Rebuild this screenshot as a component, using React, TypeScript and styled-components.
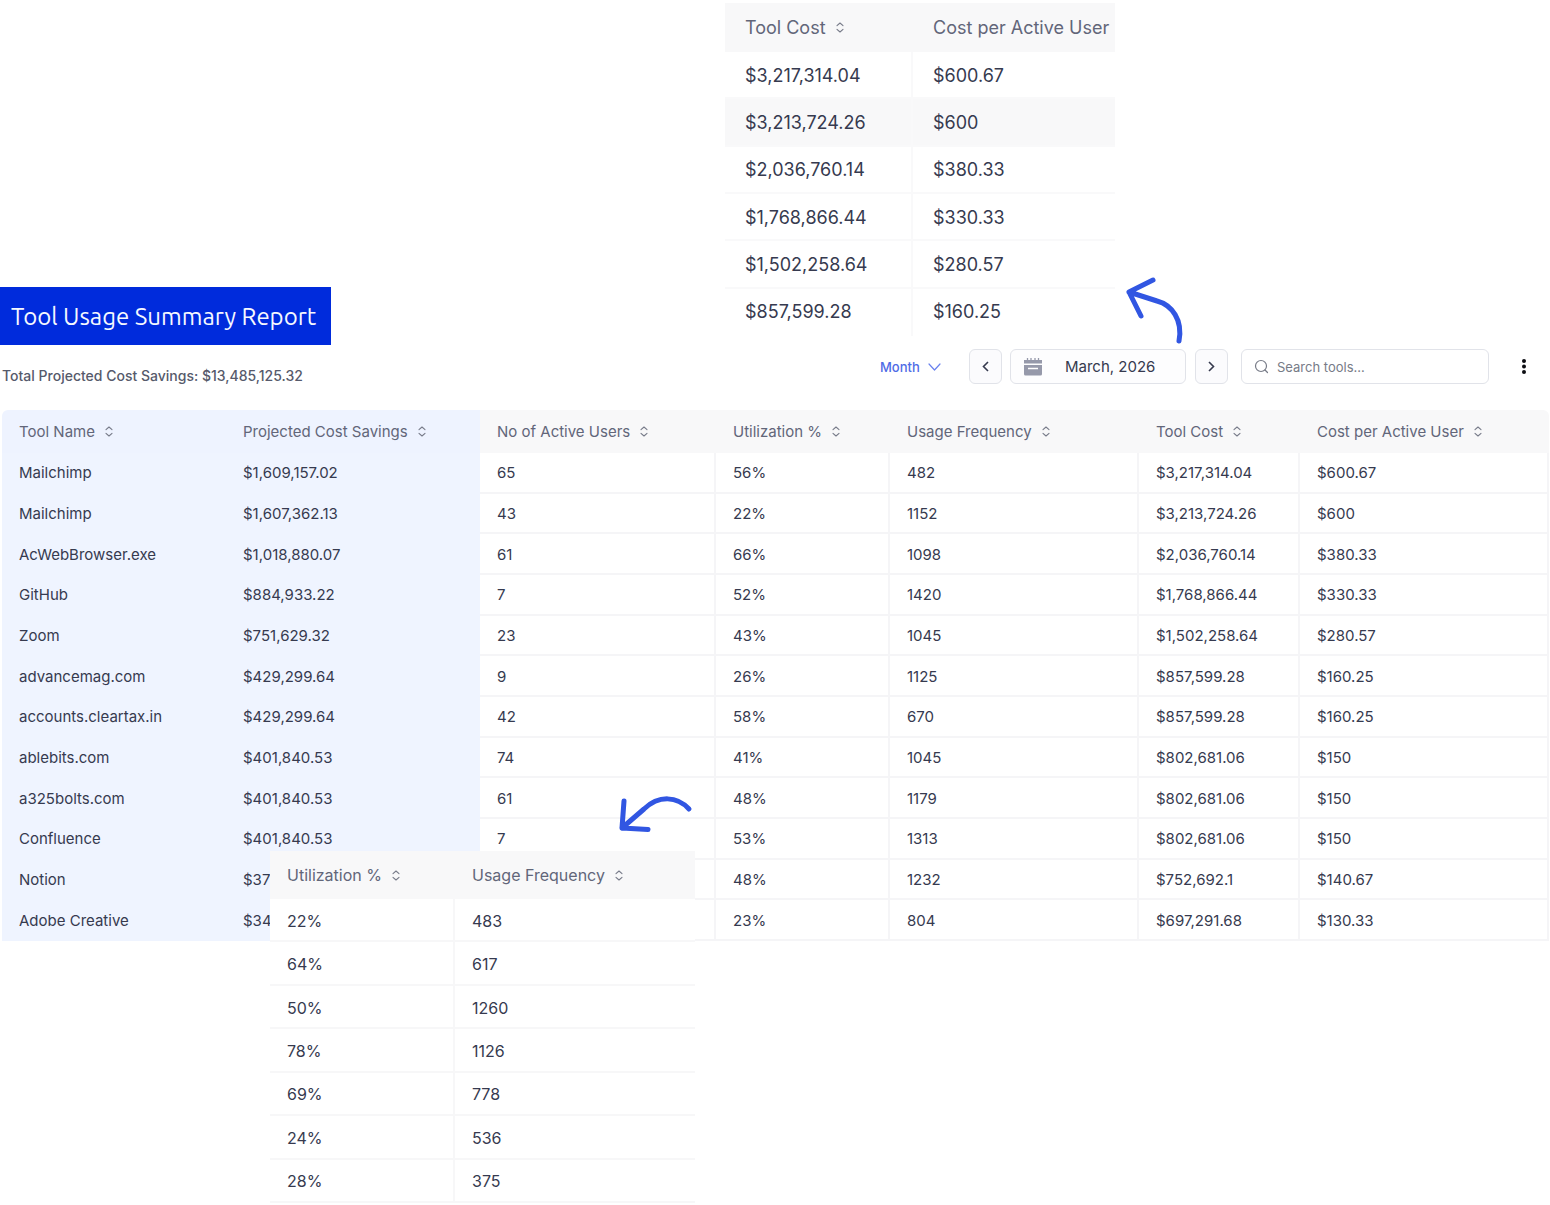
import React from "react";
import styled, { createGlobalStyle } from "styled-components";

const GlobalStyle = createGlobalStyle`
  *, *::before, *::after { box-sizing: border-box; }
  body {
    margin: 0;
    background: #ffffff;
    color: #363a4f;
    font-family: Inter, "Liberation Sans", sans-serif;
  }
  button, input, select { font: inherit; color: inherit; }
`;

const Page = styled.main`
  width: 100%;
  overflow: hidden;
`;

const Hero = styled.header`
  display: grid;
  grid-template-columns: 725fr 390px 435fr;
`;

const Title = styled.h1`
  align-self: end;
  justify-self: start;
  margin: 0;
  padding: 13px 15px 11px 11px;
  background: #002bdc;
  color: #f5f8ff;
  font-family: Ubuntu, "Noto Sans", sans-serif;
  font-size: 24px;
  font-weight: 400;
  line-height: 34px;
  white-space: nowrap;
`;

const CostCallout = styled.section`
  padding: 3px 0 9px;
`;

const HeroArrow = styled.div`
  align-self: end;
  padding-left: 10px;
  line-height: 0;
`;

const Controls = styled.div`
  display: flex;
  align-items: flex-start;
  justify-content: space-between;
  padding: 4px 10px 24px 2px;
`;

const Savings = styled.p`
  margin: 0;
  padding-top: 17px;
  color: #565a6b;
  font-size: 14px;
  font-weight: 500;
  line-height: 20px;
`;

const Toolbar = styled.div`
  display: flex;
  align-items: center;
  height: 35px;
`;

const MonthPicker = styled.label`
  display: flex;
  align-items: center;
  margin-right: 28px;
  color: #4f6ce6;
  font-size: 13px;
  font-weight: 500;

  select {
    appearance: none;
    width: 48px;
    padding: 0;
    border: 0;
    background: transparent;
    line-height: 20px;
  }
`;

const boxed = `
  height: 35px;
  border: 1px solid #e1e3e9;
  border-radius: 6px;
`;

const StepButton = styled.button`
  ${boxed}
  display: grid;
  place-items: center;
  width: 33px;
  padding: 0;
  background: #fbfbfd;
`;

const DateButton = styled.button`
  ${boxed}
  display: flex;
  align-items: center;
  gap: 22px;
  width: 176px;
  margin: 0 9px 0 8px;
  padding: 0 12px;
  background: #fdfdfe;
  font-size: 15px;
  white-space: nowrap;
`;

const SearchBox = styled.label`
  ${boxed}
  display: flex;
  align-items: center;
  gap: 8px;
  width: 248px;
  margin: 0 19px 0 13px;
  padding: 0 12px;
  background: #ffffff;

  input {
    flex: 1;
    min-width: 0;
    padding: 0;
    border: 0;
    outline: 0;
    background: transparent;
    font-size: 13px;
    line-height: 20px;
  }
  input::placeholder { color: #777b87; opacity: 1; }
`;

const MenuButton = styled.button`
  display: grid;
  place-items: center;
  width: 32px;
  height: 32px;
  padding: 0;
  border: 0;
  background: transparent;
`;

const Report = styled.section`
  position: relative;
  padding: 0 1px 0 2px;
`;

const ReportArrow = styled.div`
  position: absolute;
  top: 385px;
  left: 617px;
  line-height: 0;
`;

const UsageCallout = styled.section`
  position: relative;
  z-index: 1;
  width: 425px;
  margin: -90px 0 0 270px;
  background: #ffffff;
`;

type Size = "small" | "medium" | "large";

const metrics = {
  small: { font: 15, pad: 17, head: 43, height: 531, radius: 6, line: "#f5f5f7" },
  medium: { font: 16, pad: 17, head: 48, height: 352, radius: 0, line: "#f7f7f8" },
  large: { font: 18, pad: 20, head: 49, height: 333, radius: 0, line: "#f9f9fa" },
};

const Table = styled.table<{ $size: Size }>`
  width: 100%;
  height: ${(p) => metrics[p.$size].height}px;
  table-layout: fixed;
  border-spacing: 0;
  border-radius: ${(p) => metrics[p.$size].radius}px ${(p) => metrics[p.$size].radius}px 0 0;
  overflow: hidden;
  font-size: ${(p) => metrics[p.$size].font}px;
  line-height: 20px;

  th, td {
    padding: 0 0 0 ${(p) => metrics[p.$size].pad}px;
    text-align: left;
    white-space: nowrap;
    font-weight: 400;
  }
  th { height: ${(p) => metrics[p.$size].head}px; }
`;

const HeadCell = styled.th<{ $tinted: boolean }>`
  background: ${(p) => (p.$tinted ? "#eef3ff" : "#f8f8f9")};
  color: #626679;
`;

const Cell = styled.td<{ $line: string; $tinted: boolean; $divided: boolean; $ruled: boolean; $active: boolean }>`
  background: ${(p) => (p.$tinted ? "#eff4ff" : p.$active ? "#f8f8f9" : "#ffffff")};
  box-shadow: ${(p) => (p.$ruled ? `inset 0 -2px ${p.$line}` : "none")};
  border-right: ${(p) => (p.$divided ? `2px solid ${p.$line}` : "0")};
`;

const SortButton = styled.button`
  display: inline-flex;
  align-items: center;
  gap: 10px;
  padding: 0;
  border: 0;
  background: transparent;
`;

const SortIcon = () => (
  <svg width="8" height="11" viewBox="0 0 8 11" fill="none" stroke="#777b89" strokeWidth="1.1" strokeLinecap="round" strokeLinejoin="round" aria-hidden="true">
    <path d="M1 3.700 4 1l3 2.700M1 7.300 4 10l3-2.700" />
  </svg>
);

interface Column {
  label: string;
  width: number;
  tinted?: boolean;
  plain?: boolean;
}

interface DataTableProps {
  label: string;
  size: Size;
  columns: Column[];
  rows: string[][];
  activeRow?: number;
}

const DataTable = ({ label, size, columns, rows, activeRow }: DataTableProps) => (
  <Table $size={size} aria-label={label}>
    <colgroup>
      {columns.map((c) => (
        <col key={c.label} width={c.width} />
      ))}
    </colgroup>
    <thead>
      <tr>
        {columns.map((c) => (
          <HeadCell key={c.label} scope="col" $tinted={!!c.tinted}>
            <SortButton type="button">
              {c.label}
              {!c.plain && <SortIcon />}
            </SortButton>
          </HeadCell>
        ))}
      </tr>
    </thead>
    <tbody>
      {rows.map((row, r) => (
        <tr key={r}>
          {row.map((value, i) => (
            <Cell
              key={i}
              $line={metrics[size].line}
              $tinted={!!columns[i].tinted}
              $divided={!columns[i].tinted && (i < row.length - 1 || size === "small")}
              $ruled={!columns[i].tinted && (r < rows.length - 1 || size !== "large")}
              $active={r === activeRow}
            >
              {value}
            </Cell>
          ))}
        </tr>
      ))}
    </tbody>
  </Table>
);

const reportColumns: Column[] = [
  { label: "Tool Name", width: 224, tinted: true },
  { label: "Projected Cost Savings", width: 254, tinted: true },
  { label: "No of Active Users", width: 236 },
  { label: "Utilization %", width: 174 },
  { label: "Usage Frequency", width: 249 },
  { label: "Tool Cost", width: 161 },
  { label: "Cost per Active User", width: 249 },
];

const reportRows = [
  ["Mailchimp", "$1,609,157.02", "65", "56%", "482", "$3,217,314.04", "$600.67"],
  ["Mailchimp", "$1,607,362.13", "43", "22%", "1152", "$3,213,724.26", "$600"],
  ["AcWebBrowser.exe", "$1,018,880.07", "61", "66%", "1098", "$2,036,760.14", "$380.33"],
  ["GitHub", "$884,933.22", "7", "52%", "1420", "$1,768,866.44", "$330.33"],
  ["Zoom", "$751,629.32", "23", "43%", "1045", "$1,502,258.64", "$280.57"],
  ["advancemag.com", "$429,299.64", "9", "26%", "1125", "$857,599.28", "$160.25"],
  ["accounts.cleartax.in", "$429,299.64", "42", "58%", "670", "$857,599.28", "$160.25"],
  ["ablebits.com", "$401,840.53", "74", "41%", "1045", "$802,681.06", "$150"],
  ["a325bolts.com", "$401,840.53", "61", "48%", "1179", "$802,681.06", "$150"],
  ["Confluence", "$401,840.53", "7", "53%", "1313", "$802,681.06", "$150"],
  ["Notion", "$37", "", "48%", "1232", "$752,692.1", "$140.67"],
  ["Adobe Creative", "$34", "", "23%", "804", "$697,291.68", "$130.33"],
];

const costColumns: Column[] = [
  { label: "Tool Cost", width: 188 },
  { label: "Cost per Active User", width: 202, plain: true },
];

const costRows = reportRows.slice(0, 6).map((row) => [row[5], row[6]]);

const usageColumns: Column[] = [
  { label: "Utilization %", width: 185 },
  { label: "Usage Frequency", width: 240 },
];

const usageRows = [
  ["22%", "483"],
  ["64%", "617"],
  ["50%", "1260"],
  ["78%", "1126"],
  ["69%", "778"],
  ["24%", "536"],
  ["28%", "375"],
];

export default function App() {
  return (
    <Page>
      <GlobalStyle />
      <Hero>
        <Title>Tool Usage Summary Report</Title>
        <CostCallout>
          <DataTable label="Tool cost detail" size="large" columns={costColumns} rows={costRows} activeRow={1} />
        </CostCallout>
        <HeroArrow>
          <svg width="62" height="70" viewBox="1125 275 62 70" fill="none" stroke="#3156e2" strokeWidth="5" strokeLinecap="round" strokeLinejoin="round" aria-hidden="true">
            <path d="M1153 280 1129 292l12 24M1129 292l28 9C1172 305 1183 320 1179 341" />
          </svg>
        </HeroArrow>
      </Hero>

      <Controls>
        <Savings>Total Projected Cost Savings: $13,485,125.32</Savings>
        <Toolbar>
          <MonthPicker>
            <select aria-label="Period" defaultValue="Month">
              <option>Month</option>
            </select>
            <svg width="13" height="8" viewBox="0 0 13 8" fill="none" stroke="#6a82ee" strokeWidth="1.2" strokeLinecap="round" strokeLinejoin="round" aria-hidden="true">
              <path d="m1 1 5.5 6L12 1" />
            </svg>
          </MonthPicker>
          <StepButton type="button" aria-label="Previous month">
            <svg width="7" height="11" viewBox="0 0 7 11" fill="none" stroke="#363a4f" strokeWidth="1.6" aria-hidden="true">
              <path d="M6 1 1.5 5.5 6 10" />
            </svg>
          </StepButton>
          <DateButton type="button">
            <svg width="20" height="18" viewBox="0 0 20 18" aria-hidden="true">
              <path d="M4.5 0v3M8 0v3M12 0v3M15.500 0v3" stroke="#9699aa" strokeWidth="1.300" />
              <path d="M1 2h18v3.500H1zM1 7h18v9a1.500 1.500 0 0 1-1.500 1.500h-15A1.500 1.500 0 0 1 1 16z" fill="#9699aa" />
              <path d="M5 10.500h10" stroke="#ffffff" strokeWidth="1.500" />
            </svg>
            March, 2026
          </DateButton>
          <StepButton type="button" aria-label="Next month">
            <svg width="7" height="11" viewBox="0 0 7 11" fill="none" stroke="#363a4f" strokeWidth="1.6" aria-hidden="true">
              <path d="m1 1 4.500 4.500L1 10" />
            </svg>
          </StepButton>
          <SearchBox>
            <svg width="15" height="15" viewBox="0 0 15 15" fill="none" stroke="#777b87" strokeWidth="1.200" strokeLinecap="round" aria-hidden="true">
              <circle cx="7" cy="7" r="5.500" />
              <path d="m11 11 2.500 2.500" />
            </svg>
            <input type="search" aria-label="Search tools" placeholder="Search tools..." />
          </SearchBox>
          <MenuButton type="button" aria-label="More options">
            <svg width="4" height="15" viewBox="0 0 4 15" fill="#0c0d12" aria-hidden="true">
              <circle cx="2" cy="2" r="2" />
              <circle cx="2" cy="7.500" r="2" />
              <circle cx="2" cy="13" r="2" />
            </svg>
          </MenuButton>
        </Toolbar>
      </Controls>

      <Report>
        <DataTable label="Tool usage summary" size="small" columns={reportColumns} rows={reportRows} />
        <ReportArrow>
          <svg width="78" height="40" viewBox="617 795 78 40" fill="none" stroke="#3156e2" strokeWidth="5" strokeLinecap="round" strokeLinejoin="round" aria-hidden="true">
            <path d="M624 801 622 828l26 1.500M622 828l22-19C659 795 677 796 689 809" />
          </svg>
        </ReportArrow>
      </Report>

      <UsageCallout>
        <DataTable label="Usage detail" size="medium" columns={usageColumns} rows={usageRows} />
      </UsageCallout>
    </Page>
  );
}
